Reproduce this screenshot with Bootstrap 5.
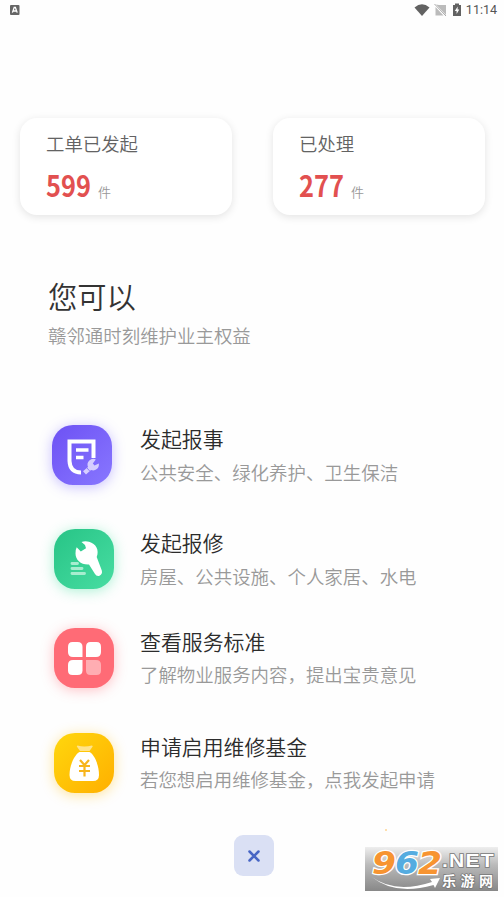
<!DOCTYPE html>
<html lang="zh-CN">
<head>
<meta charset="utf-8">
<meta name="viewport" content="width=device-width, initial-scale=1">
<title>赣邻通</title>
<link href="https://cdn.jsdelivr.net/npm/bootstrap@5.3.0/dist/css/bootstrap.min.css" rel="stylesheet">
<style>
body{font-family:"Noto Sans CJK SC DemiLight","Noto Sans CJK SC",sans-serif;background:#fefefe;color:#333;height:897px;overflow:hidden}
.status-bar{height:20px;padding:0 7px 0 10px}
.clock{font:400 12.5px/20px Roboto,sans-serif;color:#555;letter-spacing:0;margin-left:4px}
.stats{margin-top:98px;padding:0 19px 0 20px;gap:41px}
.stat-card{height:97px;border-radius:17px;background:#fff;padding:12px 26px 0;box-shadow:0 2px 8px rgba(0,0,0,.11)}
.stat-label{font-size:18.4px;line-height:26px;color:#636363;font-weight:350}
.stat-value{margin-top:11px;height:34px;line-height:34px}
.stat-num{display:inline-block;width:45px;font-family:"Noto Sans CJK SC",sans-serif;font-size:29.5px;font-weight:700;color:#e25050;transform:scaleX(.86);transform-origin:0 50%}
.stat-unit{font-size:13px;color:#999;font-weight:350;margin-left:7px}
.intro{margin:59px 0 0 48px}
.intro-title{font-size:29.3px;line-height:42px;color:#333;font-weight:350}
.intro-sub{font-size:18.45px;line-height:28px;color:#999;margin-top:5px;font-weight:350}
.services{margin-top:76px}
.service{height:60px;padding-left:54px;gap:26px}
.service:first-child{padding-left:52px;gap:28px}
.s2{margin-top:44px}.s3{margin-top:39px}.s4{margin-top:45px}
.tile{width:60px;height:60px;border-radius:21px}
.t1{background:linear-gradient(135deg,#6d51f4,#8877ff);box-shadow:0 2px 13px rgba(125,105,255,.42)}
.t2{background:linear-gradient(135deg,#27c486,#48dda2);box-shadow:0 2px 13px rgba(60,225,155,.42)}
.t3{background:#ff6b76;box-shadow:0 2px 13px rgba(255,107,118,.42)}
.t4{background:linear-gradient(135deg,#ffd70d,#ffaf00);box-shadow:0 2px 13px rgba(255,190,20,.42)}
.service-title{font-size:20.9px;line-height:30px;color:#2c2c2c;font-weight:350}
.service-sub{font-size:18.45px;line-height:28px;color:#999;font-weight:350;margin-top:5px}
.service-text{margin-top:-1px}
.s3 .service-text,.s4 .service-text{margin-top:-2px}
.s3 .service-sub,.s4 .service-sub{margin-top:4px}
.close-btn{width:40px;height:41px;border-radius:9px;background:#dae0f4;border:0;margin:42px 0 0 234px}
.watermark{right:6px;bottom:6px;width:133px;height:68px}
</style>
<script src="https://cdn.jsdelivr.net/npm/bootstrap@5.3.0/dist/js/bootstrap.bundle.min.js"></script>
</head>
<body class="position-relative">
<header class="status-bar d-flex align-items-center justify-content-between">
  <svg width="10" height="10" viewBox="0 0 10 10"><rect width="9.5" height="10" rx="1" fill="#666"/><path d="M2.4 7.6 4.2 2.5h1.2l1.8 5.1M3.2 6h3.2" fill="none" stroke="#fff" stroke-width="1.3"/></svg>
  <div class="d-flex align-items-center">
    <svg width="48" height="16" viewBox="0 0 48 16">
      <path d="M.5 5.5Q8 -1 15.500 5.500L8 14Z" fill="#626262"/>
      <path d="M22 2.500 32 13V3H25ZM21.500 5V13.500H29.500Z" fill="#bbb"/><path d="M20.500 2 32 14" stroke="#aaa" stroke-width="1"/>
      <path d="M39 3h2V1.500h4V3h2v11h-8Z" fill="#626262"/><path d="M43.700 4.500 40.800 9h1.800v3l2.700-4.500h-1.700Z" fill="#fff"/>
    </svg>
    <span class="clock">11:14</span>
  </div>
</header>
<main>
  <section class="stats d-flex">
    <div class="stat-card flex-fill w-50">
      <div class="stat-label">工单已发起</div>
      <div class="stat-value d-flex"><span class="stat-num">599</span><span class="stat-unit pt-1 mt-1">件</span></div>
    </div>
    <div class="stat-card flex-fill w-50">
      <div class="stat-label">已处理</div>
      <div class="stat-value d-flex"><span class="stat-num">277</span><span class="stat-unit pt-1 mt-1">件</span></div>
    </div>
  </section>
  <section class="intro">
    <h1 class="intro-title mb-0">您可以</h1>
    <p class="intro-sub mb-0">赣邻通时刻维护业主权益</p>
  </section>
  <section class="services">
    <div class="service d-flex align-items-center">
      <div class="tile t1 flex-shrink-0">
        <svg class="d-block" width="60" height="60" viewBox="0 0 60 60">
          <path d="M41.500 33V16.500H17.500V36Q18 47.500 29 47.500" fill="none" stroke="#fff" stroke-width="4"/>
          <path d="M24 25h12.500M24 32.500h7.500" stroke="#fff" stroke-width="3.600"/>
          <path d="M43.800 34.500A5.800 5.800 0 0 0 36 42L31 46.200 34 49.500 39 45A5.800 5.800 0 0 0 46.800 38.500L42.500 40.500 40.800 38.500Z" fill="#d6ceff"/>
          <path d="m35 43 2.700 3" stroke="#7d6af9" stroke-width=".8"/>
        </svg>
      </div>
      <div class="service-text"><div class="service-title">发起报事</div><div class="service-sub">公共安全、绿化养护、卫生保洁</div></div>
    </div>
    <div class="service s2 d-flex align-items-center">
      <div class="tile t2 flex-shrink-0">
        <svg class="d-block" width="60" height="60" viewBox="0 0 60 60">
          <path d="M27.500 13Q31 11.500 35 12.700C42 14.500 45.500 21 42.700 28L47.800 41.500Q48.800 45 45.500 46.700 42.500 47.500 41 45L35 35.500C27 36 21.500 31 21.500 24.500Q21.300 21 22.700 18.300L26.800 22.600 32 19.300 31 16Z" fill="#fff"/>
          <path d="M18 34.500h5.500M18 39.500h10M18 44.500h12.500" stroke="#a6edcf" stroke-width="2.900" stroke-linecap="round"/>
        </svg>
      </div>
      <div class="service-text"><div class="service-title">发起报修</div><div class="service-sub">房屋、公共设施、个人家居、水电</div></div>
    </div>
    <div class="service s3 d-flex align-items-center">
      <div class="tile t3 flex-shrink-0">
        <svg class="d-block" width="60" height="60" viewBox="0 0 60 60" fill="#fff">
          <path d="M18.500 14h5Q28.500 14 28.500 19v10H19Q14 29 14 24v-5Q14 14 18.500 14Z"/>
          <path d="M36.500 14h6Q47 14 47 19v5q0 5-5 5H32V19q0-5 4.500-5Z"/>
          <path d="M19 32h9.500v10.500q0 4.500-5 4.500h-5Q14 47 14 42.500V37q0-5 5-5Z"/>
          <path d="M32 32h10q5 0 5 5v5.500q0 4.500-4.500 4.500h-6Q32 47 32 42.500Z" fill="#ffadb2"/>
        </svg>
      </div>
      <div class="service-text"><div class="service-title">查看服务标准</div><div class="service-sub">了解物业服务内容，提出宝贵意见</div></div>
    </div>
    <div class="service s4 d-flex align-items-center">
      <div class="tile t4 flex-shrink-0">
        <svg class="d-block" width="60" height="60" viewBox="0 0 60 60">
          <path d="M23.500 12.500Q30 14.500 38 12.500 39.500 13 38 14.500L35.500 18H26L23.500 14.500Q22 13 23.500 12.500Z" fill="#ffe38b"/>
          <path d="M25.500 19h10C41 22 45 33 45 42Q45 48 39 48H21.500Q15.500 48 15.500 42C15.500 33 20 22 25.500 19Z" fill="#fff"/>
          <path d="M26 27l4.500 5 4.500-5M30.500 32v11.500M25 33h11M25 38h11" fill="none" stroke="#f7b51d" stroke-width="2.200"/>
        </svg>
      </div>
      <div class="service-text"><div class="service-title">申请启用维修基金</div><div class="service-sub">若您想启用维修基金，点我发起申请</div></div>
    </div>
  </section>
</main>
<button class="close-btn d-flex align-items-center justify-content-center p-0" aria-label="关闭">
  <svg width="14" height="14" viewBox="0 0 14 14"><path d="m2.500 2.500 9 9m0-9-9 9" stroke="#4866c5" stroke-width="2.500" stroke-linecap="round"/></svg>
</button>
<svg class="watermark position-absolute" viewBox="0 0 133 68">
  <defs><linearGradient id="plate" x1="0" y1="0" x2="0" y2="1"><stop offset="0" stop-color="#eee"/><stop offset=".4" stop-color="#bbb"/><stop offset="1" stop-color="#888"/></linearGradient></defs>
  <rect y="24" width="133" height="44" fill="url(#plate)"/>
  <circle cx="21" cy="7" r=".8" fill="#ffb84a"/>
  <g font-family="DejaVu Sans,sans-serif" font-weight="700" font-style="italic" font-size="32" stroke="#fff" stroke-width="2.500" paint-order="stroke">
    <text x="7" y="51" textLength="24" lengthAdjust="spacingAndGlyphs" fill="#f79431">9</text>
    <text x="30" y="51" textLength="24" lengthAdjust="spacingAndGlyphs" fill="#55ace0">6</text>
    <text x="53" y="51" textLength="24" lengthAdjust="spacingAndGlyphs" fill="#f79431">2</text>
  </g>
  <g fill="#fff" stroke="#777" stroke-width="1.500" paint-order="stroke">
    <text x="77" y="43.500" textLength="53" lengthAdjust="spacingAndGlyphs" font-family="Liberation Sans,sans-serif" font-weight="700" font-size="18" letter-spacing="1">.NET</text>
    <text x="77" y="63" textLength="51" font-family="Noto Sans CJK SC,sans-serif" font-weight="700" font-size="14">乐游网</text>
  </g>
  <path d="M7 54Q30 71 67 59L65 56 75 55 70 65 68.500 62Q30 73 7 54Z" fill="#fff"/>
</svg>
</body>
</html>
